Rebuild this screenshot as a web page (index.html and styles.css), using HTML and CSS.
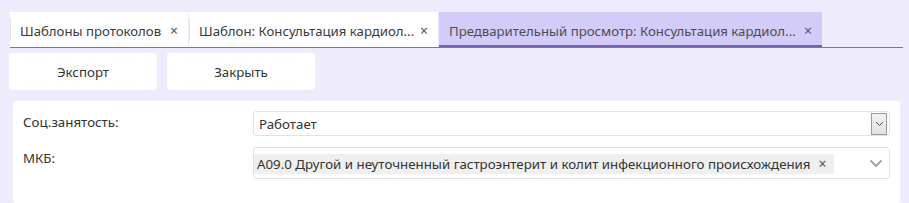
FILE: index.html
```html
<!DOCTYPE html>
<html lang="ru">
<head>
<meta charset="utf-8">
<link rel="stylesheet" href="styles.css">
</head>
<body>
<div class="tabs">
  <div class="tab"><span class="tab-title">Шаблоны протоколов</span><span class="tab-close">×</span></div>
  <div class="tab"><span class="tab-title">Шаблон: Консультация кардиол...</span><span class="tab-close">×</span></div>
  <div class="tab active"><span class="tab-title">Предварительный просмотр: Консультация кардиол...</span><span class="tab-close">×</span></div>
</div>
<div class="toolbar">
  <button class="btn">Экспорт</button>
  <button class="btn">Закрыть</button>
</div>
<div class="panel">
  <div class="row">
    <div class="label">Соц.занятость:</div>
    <div class="select">
      <span class="select-value">Работает</span>
      <span class="select-btn"><svg width="9" height="6" viewBox="0 0 9 6"><path d="M1 1l3.5 3.5L8 1" fill="none" stroke="#555" stroke-width="1"/></svg></span>
    </div>
  </div>
  <div class="row row-mkb">
    <div class="label">МКБ:</div>
    <div class="multi">
      <span class="tag">A09.0 Другой и неуточненный гастроэнтерит и колит инфекционного происхождения<span class="tag-x">×</span></span>
      <span class="chev"><svg width="14" height="9" viewBox="0 0 14 9"><path d="M1.5 1.5l5.5 5.5 5.5-5.5" fill="none" stroke="#a3a3a3" stroke-width="2"/></svg></span>
    </div>
  </div>
</div>
</body>
</html>
```
FILE: styles.css
```css
* { box-sizing: border-box; }
body {
  margin: 0;
  background: #eeebfd;
  font-family: "Noto Sans", "Open Sans", sans-serif;
  font-size: 13px;
  color: #333;
  width: 909px;
  height: 203px;
  overflow: hidden;
}
.tabs {
  display: flex;
  margin: 12px 6px 0 10px;
  height: 36px;
  border-bottom: 1px solid #7d70b4;
}
.tab {
  position: relative;
  display: flex;
  align-items: center;
  justify-content: space-between;
  flex-shrink: 0;
  background: #fff;
  padding: 0 10px 0 10px;
  height: 35px;
  color: #3a3a3a;
  font-size: 13.2px;
  white-space: nowrap;
}
.tab::before {
  content: "";
  position: absolute;
  left: 0;
  top: 6px;
  bottom: 6px;
  width: 1px;
  background: #e4e4e4;
}
.tab + .tab { margin-left: 1px; }
.tab-title { padding-top: 2px; }
.tab-close {
  font-size: 14px;
  color: #555;
  padding-top: 1px;
}
.tab.active {
  background: #d3cbf8;
  box-shadow: inset 0 -2px 0 #7364ae;
  color: #4b4b55;
}
.tab.active::before { display: none; }
.tab:nth-child(1) { width: 178px; }
.tab:nth-child(2) { width: 249px; }
.tab:nth-child(3) { width: 383px; }

.toolbar {
  display: flex;
  gap: 10px;
  padding: 5px 0 0 9px;
}
.btn {
  width: 148px;
  height: 37px;
  border: none;
  border-radius: 3px;
  background: #fff;
  font-family: inherit;
  font-size: 13.3px;
  color: #333;
  padding: 0;
}
.panel {
  margin: 11px 9px 0 13px;
  background: #fff;
  border-radius: 3px;
  height: 102px;
  padding: 10px 10px 0 10px;
}
.row {
  display: flex;
  align-items: flex-start;
}
.label {
  width: 230px;
  padding-top: 2px;
  font-size: 13.3px;
  color: #333;
}
.select {
  flex: 1;
  height: 25px;
  border: 1px solid #e3e3e3;
  border-radius: 3px;
  display: flex;
  align-items: center;
  padding-left: 5px;
  padding-right: 2px;
  font-size: 13.3px;
}
.select-value { flex: 1; padding-top: 1px; }
.select-btn {
  width: 16px;
  height: 22px;
  border: 1px solid #9a9a9a;
  background: linear-gradient(#f3f3f3, #e2e2e2);
  display: flex;
  align-items: center;
  justify-content: center;
}
.row-mkb { margin-top: 11px; }
.multi {
  flex: 1;
  height: 32px;
  border: 1px solid #e3e3e3;
  border-radius: 3px;
  display: flex;
  align-items: center;
  padding-right: 6px;
}
.tag {
  background: #efefef;
  height: 20px;
  display: flex;
  align-items: center;
  padding: 0 7px 0 3px;
  font-size: 13.3px;
  color: #333;
  margin-top: 1px;
}
.tag-x { margin-left: 8px; font-size: 14px; color: #555; }
.chev { margin-left: auto; display: flex; }
```
